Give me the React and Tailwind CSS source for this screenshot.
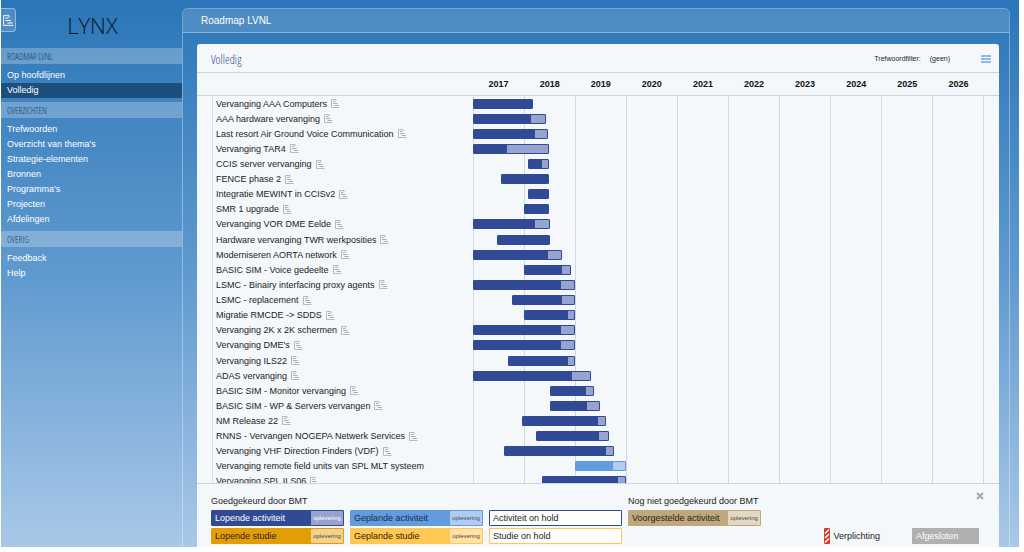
import React from "react";

const YEARS = [2017, 2018, 2019, 2020, 2021, 2022, 2023, 2024, 2025, 2026];
const TOTAL_MONTHS = YEARS.length * 12;

// start, delivery and end are months counted from January 2017
const ACTIVITIES = [
  { name: "Vervanging AAA Computers", start: 0, end: 14 },
  { name: "AAA hardware vervanging", start: 0, delivery: 13.8, end: 17.1 },
  { name: "Last resort Air Ground Voice Communication", start: 0, delivery: 14.8, end: 17.6 },
  { name: "Vervanging TAR4", start: 0, delivery: 7.9, end: 17.8 },
  { name: "CCIS server vervanging", start: 12.8, delivery: 16.2, end: 17.9 },
  { name: "FENCE phase 2", start: 6.5, end: 17.9 },
  { name: "Integratie MEWINT in CCISv2", start: 12.8, end: 17.9 },
  { name: "SMR 1 upgrade", start: 12, end: 17.9 },
  { name: "Vervanging VOR DME Eelde", start: 0, delivery: 14.8, end: 18 },
  { name: "Hardware vervanging TWR werkposities", start: 5.6, end: 18 },
  { name: "Moderniseren AORTA network", start: 0, delivery: 17.8, end: 20.8 },
  { name: "BASIC SIM - Voice gedeelte", start: 12, delivery: 21, end: 23 },
  { name: "LSMC - Binairy interfacing proxy agents", start: 0, delivery: 20.8, end: 24 },
  { name: "LSMC - replacement", start: 9.1, delivery: 21, end: 24 },
  { name: "Migratie RMCDE -> SDDS", start: 12, delivery: 22.4, end: 24 },
  { name: "Vervanging 2K x 2K schermen", start: 0, delivery: 20.8, end: 24 },
  { name: "Vervanging DME's", start: 0, delivery: 20.9, end: 24 },
  { name: "Vervanging ILS22", start: 8.2, delivery: 22.4, end: 24 },
  { name: "ADAS vervanging", start: 0, delivery: 23.5, end: 27.8 },
  { name: "BASIC SIM - Monitor vervanging", start: 18, delivery: 26.8, end: 28.3 },
  { name: "BASIC SIM - WP & Servers vervangen", start: 18, delivery: 26.9, end: 29.8 },
  { name: "NM Release 22", start: 11.5, delivery: 29.6, end: 31.2 },
  { name: "RNNS - Vervangen NOGEPA Netwerk Services", start: 14.8, delivery: 29.8, end: 32 },
  { name: "Vervanging VHF Direction Finders (VDF)", start: 7.3, delivery: 31.4, end: 33 },
  { name: "Vervanging remote field units van SPL MLT systeem", start: 24, delivery: 33, end: 36, planned: true },
  { name: "Vervanging SPL ILS06", start: 16.1, delivery: 34.3, end: 36 },
];

const MENU = [
  { title: "Roadmap LVNL", items: ["Op hoofdlijnen", "Volledig"] },
  {
    title: "Overzichten",
    items: ["Trefwoorden", "Overzicht van thema's", "Strategie-elementen", "Bronnen", "Programma's", "Projecten", "Afdelingen"],
  },
  { title: "Overig", items: ["Feedback", "Help"] },
];

const NARROW = "font-['Open_Sans_Condensed_Light','Open_Sans_Condensed','Open_Sans',sans-serif] font-light";

function RoadmapIcon({ className }) {
  return (
    <svg viewBox="0 0 18 18" className={className} fill="none" stroke="currentColor" aria-hidden="true">
      <path d="M10 4V1H1V17H17" strokeWidth="1.500" />
      <path d="M4 5h5M4 9h9M7 13h9" strokeWidth="1.800" />
    </svg>
  );
}

function Sidebar() {
  return (
    <aside className="flex w-[181px] shrink-0 flex-col">
      <div className="flex h-12 items-start pt-2">
        <button
          type="button"
          aria-label="Menu"
          className="flex h-6 w-[15px] shrink-0 items-center justify-center rounded-r-sm border border-l-0 border-white/40 bg-white/15 text-white"
        >
          <RoadmapIcon className="size-[11px]" />
        </button>
        <div className="flex-1 pt-[3px] pr-[13px] text-center font-['Open_Sans',sans-serif] text-[22px] leading-7 font-light text-[#0b1420]">
          LYNX
        </div>
      </div>
      <nav className="flex flex-col gap-1">
        {MENU.map((section) => (
          <section key={section.title}>
            <h2 className={`h-4 bg-white/25 px-1.5 text-[9px] leading-[17px] text-[#1d3f5f] uppercase ${NARROW}`}>{section.title}</h2>
            <ul className="pt-1">
              {section.items.map((item) => (
                <li key={item}>
                  <a
                    href="#"
                    className={
                      item === "Volledig"
                        ? "block bg-[#1d4f7c] px-1.5 text-[9px] leading-[15px] text-white"
                        : "block px-1.5 text-[9px] leading-[15px] text-white"
                    }
                  >
                    {item}
                  </a>
                </li>
              ))}
            </ul>
          </section>
        ))}
      </nav>
    </aside>
  );
}

function Bar({ activity }) {
  const { start, delivery, end, planned } = activity;
  const span = end - start;
  return (
    <div
      className={
        planned
          ? "flex h-[10px] justify-end rounded-[1px] border border-[#639be0] bg-[#639be0]"
          : "flex h-[10px] justify-end rounded-[1px] border border-[#314a96] bg-[#314a96]"
      }
      style={{
        marginLeft: `${(start / TOTAL_MONTHS) * 100}%`,
        width: `${(span / TOTAL_MONTHS) * 100}%`,
      }}
    >
      {delivery !== undefined && (
        <div
          className={planned ? "bg-[#b0cdf0]" : "bg-[#98a4d0]"}
          style={{ width: `${((end - delivery) / span) * 100}%` }}
        />
      )}
    </div>
  );
}

function Chart() {
  return (
    <div className="flex min-h-0 flex-1 flex-col">
      <div className="flex h-[23px] shrink-0 border-b border-[#cdd5dc] pr-[15px] pl-[276px]">
        {YEARS.map((year) => (
          <div key={year} className="flex-1 text-center text-[9px] leading-[23px] font-bold text-[#111]">
            {year}
          </div>
        ))}
      </div>
      <div className="min-h-0 flex-1 overflow-hidden pr-[15px] pl-[15px]">
        <div className="grid grid-cols-[260px_1fr] border-l border-[#d5dce3]">
          <div className="col-start-2 row-start-1 grid grid-cols-10 border-l border-[#d0d9e2]">
            {YEARS.map((year) => (
              <div key={year} className="border-r border-[#d0d9e2]" />
            ))}
          </div>
          <ul className="col-span-2 col-start-1 row-start-1 grid h-[393px] auto-rows-fr">
            {ACTIVITIES.map((activity) => (
              <li key={activity.name} className="grid grid-cols-[260px_1fr] items-center">
                <div className="flex items-center gap-1 pl-[3px] text-[9px] leading-[14px] whitespace-nowrap text-[#222]">
                  <span>{activity.name}</span>
                  {!activity.planned && <RoadmapIcon className="size-[9px] text-[#a0a5aa]" />}
                </div>
                <Bar activity={activity} />
              </li>
            ))}
          </ul>
        </div>
      </div>
    </div>
  );
}

function LegendItem({ label, box, tag }) {
  return (
    <div className={`flex h-4 w-[133px] items-stretch justify-between rounded-[1px] border pl-[3px] text-[9px] leading-[14px] ${box}`}>
      <span>{label}</span>
      {tag && <span className={`w-8 text-center text-[6px] leading-[15px] ${tag}`}>oplevering</span>}
    </div>
  );
}

function Legend() {
  return (
    <footer className="flex h-16 shrink-0 items-start justify-between border-t border-[#cdd5dc] pr-[15px] pl-[14px]">
      <div className="grid grid-cols-[repeat(4,133px)] gap-x-1.5 gap-y-[2px] pt-[10px] text-[9px] text-[#222]">
        <div className="col-span-3 leading-[14px]">Goedgekeurd door BMT</div>
        <div className="leading-[14px] whitespace-nowrap">Nog niet goedgekeurd door BMT</div>
        <LegendItem label="Lopende activiteit" box="border-[#314a96] bg-[#314a96] text-white" tag="bg-[#98a4d0] text-white" />
        <LegendItem label="Geplande activiteit" box="border-[#639be0] bg-[#639be0] text-[#1c2c44]" tag="bg-[#b0cdf0] text-[#3c4c64]" />
        <LegendItem label="Activiteit on hold" box="border-[#314a96] bg-white text-[#222]" />
        <LegendItem label="Voorgestelde activiteit" box="border-[#bfa77f] bg-[#bfa77f] text-[#2c2416]" tag="bg-[#e4d8c4] text-[#4c4436]" />
        <LegendItem label="Lopende studie" box="border-[#e39d05] bg-[#e39d05] text-[#332504]" tag="bg-[#f3d290] text-[#54431c]" />
        <LegendItem label="Geplande studie" box="border-[#ffc854] bg-[#ffc854] text-[#332504]" tag="bg-[#ffe3a8] text-[#54431c]" />
        <LegendItem label="Studie on hold" box="border-[#ffc854] bg-white text-[#222]" />
      </div>
      <div className="flex flex-col items-end pt-[6px]">
        <button type="button" aria-label="Sluiten" className="mb-[27px] block h-[11px] text-[#a6a9ac]">
          <svg viewBox="0 0 8 8" className="size-2" stroke="currentColor" strokeWidth="2" aria-hidden="true">
            <path d="M1 1l6 6M7 1L1 7" />
          </svg>
        </button>
        <div className="mr-[5px] flex h-4 items-center text-[9px] leading-4 text-[#222]">
          <svg viewBox="0 0 6 16" className="mr-[3px] h-4 w-1.5" aria-hidden="true">
            <rect width="6" height="16" rx="1" fill="#d8381f" />
            <path d="M1 5.500l4-4M1 10l4-4M1 14.500l4-4" stroke="#fff" strokeWidth="1.600" />
          </svg>
          <span>Verplichting</span>
          <span className="ml-[32px] w-[67px] bg-[#b0b0b0] pl-1 text-white">Afgesloten</span>
        </div>
      </div>
    </footer>
  );
}

export default function App() {
  return (
    <div className="h-screen bg-white pr-[5px] pb-[5px] pl-px font-['Liberation_Sans',Arial,sans-serif]">
      <div className="flex h-full bg-linear-to-b from-[#2a76b8] via-[#5f9acf] to-[#a9c8e8]">
        <Sidebar />
        <main className="mt-2 mr-[9px] flex min-w-0 flex-1 flex-col rounded-t-md border border-b-0 border-white/35">
          <h1 className="h-6 shrink-0 rounded-t-md border-b border-white/35 bg-white/15 px-[18px] text-[10px] leading-[23px] text-white">
            Roadmap LVNL
          </h1>
          <div className="mx-[10px] mt-[11px] ml-[14px] flex min-h-0 flex-1 flex-col rounded-t-[3px] bg-[#f4f8fb]">
            <header className="flex h-[29px] shrink-0 items-center border-b border-[#cdd5dc] pt-[2px] pr-2 pl-[14px]">
              <h2 className={`flex-1 pt-[2px] text-[12px] leading-6 text-[#3c4690] ${NARROW}`}>Volledig</h2>
              <div className="flex gap-[9px] pr-[31px] text-[7px] leading-4 text-[#222]">
                <span>Trefwoordfilter:</span>
                <span>(geen)</span>
              </div>
              <button type="button" aria-label="Opties" className="flex w-[10px] flex-col gap-px">
                <span className="h-[2px] bg-[#8fbbe0]" />
                <span className="h-[2px] bg-[#8fbbe0]" />
                <span className="h-[2px] bg-[#8fbbe0]" />
              </button>
            </header>
            <Chart />
            <Legend />
          </div>
        </main>
      </div>
    </div>
  );
}
